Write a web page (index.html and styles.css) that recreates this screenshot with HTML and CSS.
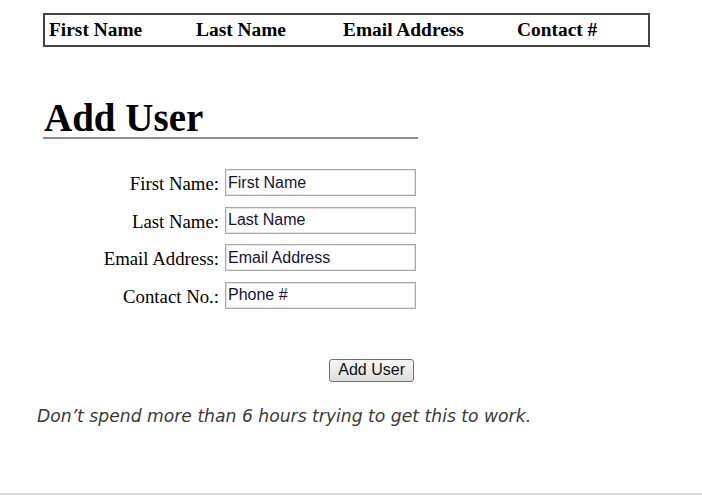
FILE: index.html
```html
<!DOCTYPE html>
<html>
<head>
<meta charset="utf-8">
<title>Add User</title>
<link rel="stylesheet" href="styles.css">
</head>
<body>
<div class="page">
  <div class="users-head">
    <div class="col">First Name</div>
    <div class="col">Last Name</div>
    <div class="col">Email Address</div>
    <div class="col">Contact #</div>
  </div>

  <h1 class="title">Add User</h1>

  <form class="user-form">
    <div class="fields">
      <label class="lbl" for="fn">First Name:</label>
      <input class="field" id="fn" type="text" value="First Name">
      <label class="lbl" for="ln">Last Name:</label>
      <input class="field" id="ln" type="text" value="Last Name">
      <label class="lbl" for="em">Email Address:</label>
      <input class="field" id="em" type="text" value="Email Address">
      <label class="lbl" for="ph">Contact No.:</label>
      <input class="field" id="ph" type="text" value="Phone #">
    </div>
    <div class="actions">
      <button class="btn" type="button">Add User</button>
    </div>
  </form>
</div>
<p class="note">Don’t spend more than 6 hours trying to get this to work.</p>
<div class="bottom-rule"></div>
</body>
</html>
```

FILE: styles.css
```css
html, body {
  margin: 0;
  padding: 0;
  background: #fff;
}
body {
  height: 496px;
  display: flex;
  flex-direction: column;
  font-family: "Liberation Serif", "Times New Roman", serif;
  color: #000;
}
.page {
  padding: 13px 0 0 43px;
}
.users-head {
  width: 607px;
  height: 34px;
  box-sizing: border-box;
  border: 2px solid #444;
  display: grid;
  grid-template-columns: 147px 147px 174px 1fr;
  padding-left: 4px;
  align-items: center;
}
.col {
  font-weight: bold;
  font-size: 19.4px;
  line-height: 30px;
}
.title {
  margin: 52px 0 0 0;
  width: 375px;
  font-size: 39px;
  line-height: 38px;
  font-weight: bold;
  padding-left: 1px;
  border-bottom: 2px solid #8c8c8c;
  box-sizing: border-box;
}
.user-form {
  margin: 30px 0 0 0;
  width: 373px;
}
.fields {
  display: grid;
  grid-template-columns: 176px 191px;
  grid-auto-rows: 27px;
  column-gap: 6px;
  row-gap: 10.5px;
  align-items: center;
}
.lbl {
  text-align: right;
  font-size: 18.8px;
  line-height: 25px;
  padding-top: 2px;
}
.field {
  box-sizing: border-box;
  height: 27px;
  width: 191px;
  margin: 0;
  border: 1px solid #a9a9a9;
  box-shadow: inset 0 0 0 1px #e4e4e4;
  padding: 0 2px;
  font-family: "Liberation Sans", Arial, sans-serif;
  font-size: 16px;
  color: #141432;
}
.actions {
  display: flex;
  justify-content: flex-end;
  padding-right: 2px;
  margin-top: 50px;
}
.btn {
  height: 23px;
  padding: 0 8px;
  border: 1px solid #707070;
  border-radius: 3px;
  background: linear-gradient(#f6f6f6, #dedede);
  font-family: "Liberation Sans", Arial, sans-serif;
  font-size: 16px;
  line-height: 20px;
  color: #111;
}
.note {
  margin: 24px 0 0 37px;
  font-family: "DejaVu Sans", "Open Sans", sans-serif;
  font-style: italic;
  font-size: 17.2px;
  color: #3a3a3a;
}
.bottom-rule {
  margin-top: auto;
  height: 2px;
  background: #dcdcdc;
  margin-bottom: 1px;
}
```
